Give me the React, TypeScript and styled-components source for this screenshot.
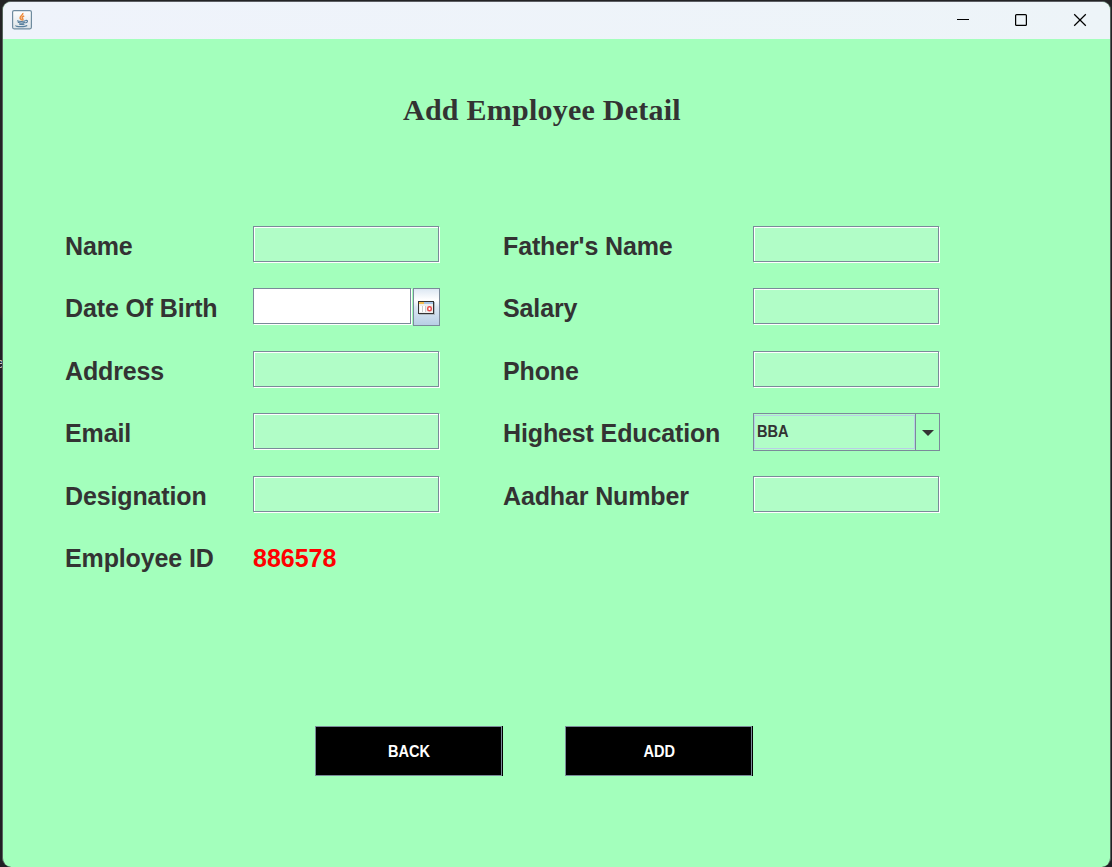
import React from "react";
import styled, { createGlobalStyle } from "styled-components";

const GlobalStyle = createGlobalStyle`
  * { box-sizing: border-box; }
  body { margin: 0; background: #202022; overflow: hidden; }
`;

const Desktop = styled.div`
  position: relative;
  width: 1112px;
  height: 867px;
  padding: 1px 1px 0 2px;
  overflow: hidden;
  background: linear-gradient(#232325 0 280px, #2e2220 286px 314px, #202024 320px);
`;

const BackgroundText = styled.span`
  position: absolute;
  left: -4px;
  top: 355px;
  font: 14px/16px "Liberation Sans", Arial, sans-serif;
  color: #c9c2bb;
`;

const Window = styled.main`
  position: relative;
  height: 866px;
  border: 1px solid #56635c;
  border-top-color: #5c5e63;
  border-bottom: 0;
  border-radius: 9px;
  overflow: hidden;
  background: #a3ffbc;
  font-family: "Liberation Sans", Arial, sans-serif;
  font-weight: bold;
  color: #333;
`;

const TitleBar = styled.header`
  height: 37px;
  display: flex;
  justify-content: space-between;
  padding: 0 1px 0 9px;
  background: linear-gradient(90deg, #eff3fb, #edf4f8);
`;

const AppIcon = styled.svg`
  width: 20px;
  height: 20px;
  margin-top: 8px;
`;

const Controls = styled.div`
  display: flex;
`;

const Control = styled.button`
  width: 58.5px;
  height: 36px;
  padding: 0;
  border: 0;
  background: none;
  display: grid;
  place-items: center;
`;

const Glyph = styled.svg`
  width: 14px;
  height: 14px;
  fill: none;
  stroke: #000;
  stroke-width: 1.25;
`;

const Heading = styled.h1`
  margin: 53px 0 0 400px;
  height: 36px;
  font: bold 30px/35px "Liberation Serif", "Times New Roman", serif;
  letter-spacing: 0.24px;
  white-space: nowrap;
`;

const Form = styled.form`
  display: grid;
  grid-template-columns: 188px 250px 250px 188px;
  grid-template-rows: 62px 63px 62px 63px 62px 40px;
  margin: 98px 0 0 62px;
`;

const Label = styled.label`
  font-size: 25px;
  line-height: 40px;
  letter-spacing: -0.13px;
  white-space: nowrap;
`;

const EmployeeId = styled.output`
  font-size: 25px;
  line-height: 40px;
  color: #f00;
`;

const Field = styled.input<{ $width?: number; $solid?: boolean }>`
  width: ${(p) => p.$width ?? 186}px;
  height: 36px;
  padding: 0 4px;
  border: 1px solid #7a8a99;
  border-radius: 0;
  background: ${(p) => (p.$solid ? "#fff" : "#b1fdc7")};
  box-shadow: inset 1px 1px #fff, 1px 1px #fff;
  outline: none;
`;

const DateGroup = styled.div`
  display: flex;
  gap: 2px;
`;

const CalendarButton = styled.button`
  width: 27px;
  height: 38px;
  padding: 1px 0 0;
  border: 1px solid #7a8a99;
  background: linear-gradient(#dde8f3, #fff 30%, #dde8f3 50%, #b8cfe5);
  display: grid;
  place-items: center;
`;

const ComboBox = styled.div`
  width: 187px;
  height: 38px;
  display: grid;
  grid-template-columns: 161px 1fr;
  border: 1px solid #7a8a99;
`;

const ComboValue = styled.div`
  padding: 1px 0;
  background: #b1fdc7;
`;

const ComboText = styled.div`
  height: 34px;
  padding-left: 2px;
  border: 1px solid #b8cfe5;
  line-height: 31px;
`;

const ComboArrow = styled.div`
  padding-top: 1px;
  border-left: 1px solid #7a8a99;
  display: grid;
  place-items: center;
`;

const Actions = styled.div`
  display: flex;
  gap: 63px;
  margin: 148px 0 0 312px;
`;

const ActionButton = styled.button`
  width: 187px;
  height: 50px;
  padding: 1px 0 0 1px;
  border: 1px solid #7a8a99;
  background: #000;
  box-shadow: 1px 0 #000;
  color: #fff;
  font-family: inherit;
  font-weight: bold;
`;

const Caption = styled.span`
  display: inline-block;
  font-size: 16px;
  transform: scaleX(0.91);
  transform-origin: ${(p: { $start?: boolean }) => (p.$start ? "left" : "center")};
`;

const JavaIcon = () => (
  <AppIcon viewBox="0 0 20 20" fill="none">
    <defs>
      <linearGradient id="tile" x1="0" y1="0" x2="0" y2="1">
        <stop offset="0" stopColor="#fff" />
        <stop offset="1" stopColor="#dce3e7" />
      </linearGradient>
    </defs>
    <rect x=".6" y=".6" width="18.8" height="18.2" rx="1.5" fill="url(#tile)" stroke="#6f8b9f" strokeWidth="1.2" />
    <path d="M10.8 3c.8 2-3.2 3-2.7 5 .2 1 1.4 1.5 1.5 2.4M12.2 6c-2.5.8-2.5 1.8-1.5 2.7.5.6.2 1.2-.3 1.6" stroke="#ee8b3a" strokeWidth="1.5" />
    <path d="M5 10.8c2 .8 6.5 .8 8.5 0M5.8 12.3c2 .8 5.5 .8 7.2 0M7 14c1.7.6 4 .6 5.5 0M13.5 10.5c2.8-.7 2.6 1.8-.2 2.4M4 15.4c-1 1.7 9 1.7 11.2.2" stroke="#587f9d" strokeWidth="1.2" />
  </AppIcon>
);

const CalendarIcon = () => (
  <svg width="17" height="14" viewBox="0 0 17 14" shapeRendering="crispEdges">
    <path d="M1 13.5h15.5V1" stroke="#aeb8c0" fill="none" />
    <rect width="16" height="13" fill="#333" />
    <path fill="#f3bd4f" d="M1 1h5v2H1z" />
    <path fill="#a9c7e8" d="M6 1h9v2H6z" />
    <path fill="#eee" d="M1 3h14v9H1z" />
    <path fill="#fff" d="M2 5h2v6H2zM5 5h2v6H5z" />
    <path fill="#ccc" d="M4 5h1v6H4zM7 5h1v6H7z" />
    <rect x="9.75" y="5.75" width="3.5" height="4" rx="1.5" fill="#fff" stroke="#e84b4b" strokeWidth="1.5" shapeRendering="auto" />
  </svg>
);

const App = () => (
  <>
    <GlobalStyle />
    <Desktop>
      <BackgroundText aria-hidden>e</BackgroundText>
      <Window>
        <TitleBar>
          <JavaIcon />
          <Controls>
            <Control aria-label="Minimize">
              <Glyph viewBox="0 0 14 14"><path d="M1 6.5h12" shapeRendering="crispEdges" /></Glyph>
            </Control>
            <Control aria-label="Maximize">
              <Glyph viewBox="0 0 14 14"><rect x="1.6" y="1.6" width="10.8" height="10.8" rx="1" /></Glyph>
            </Control>
            <Control aria-label="Close">
              <Glyph viewBox="0 0 14 14"><path d="m1.2 1.2 11.6 11.6m0-11.6L1.2 12.8" /></Glyph>
            </Control>
          </Controls>
        </TitleBar>
        <Heading>Add Employee Detail</Heading>
        <Form>
          <Label>Name</Label>
          <Field />
          <Label>Father's Name</Label>
          <Field />
          <Label>Date Of Birth</Label>
          <DateGroup>
            <Field $width={158} $solid />
            <CalendarButton type="button" aria-label="Choose date"><CalendarIcon /></CalendarButton>
          </DateGroup>
          <Label>Salary</Label>
          <Field />
          <Label>Address</Label>
          <Field />
          <Label>Phone</Label>
          <Field />
          <Label>Email</Label>
          <Field />
          <Label>Highest Education</Label>
          <ComboBox>
            <ComboValue><ComboText><Caption $start>BBA</Caption></ComboText></ComboValue>
            <ComboArrow>
              <svg width="12" height="6" viewBox="0 0 12 6"><path d="M0 0h12L6 6z" fill="#333" /></svg>
            </ComboArrow>
          </ComboBox>
          <Label>Designation</Label>
          <Field />
          <Label>Aadhar Number</Label>
          <Field />
          <Label>Employee ID</Label>
          <EmployeeId>886578</EmployeeId>
        </Form>
        <Actions>
          <ActionButton><Caption>BACK</Caption></ActionButton>
          <ActionButton><Caption>ADD</Caption></ActionButton>
        </Actions>
      </Window>
    </Desktop>
  </>
);

export default App;
